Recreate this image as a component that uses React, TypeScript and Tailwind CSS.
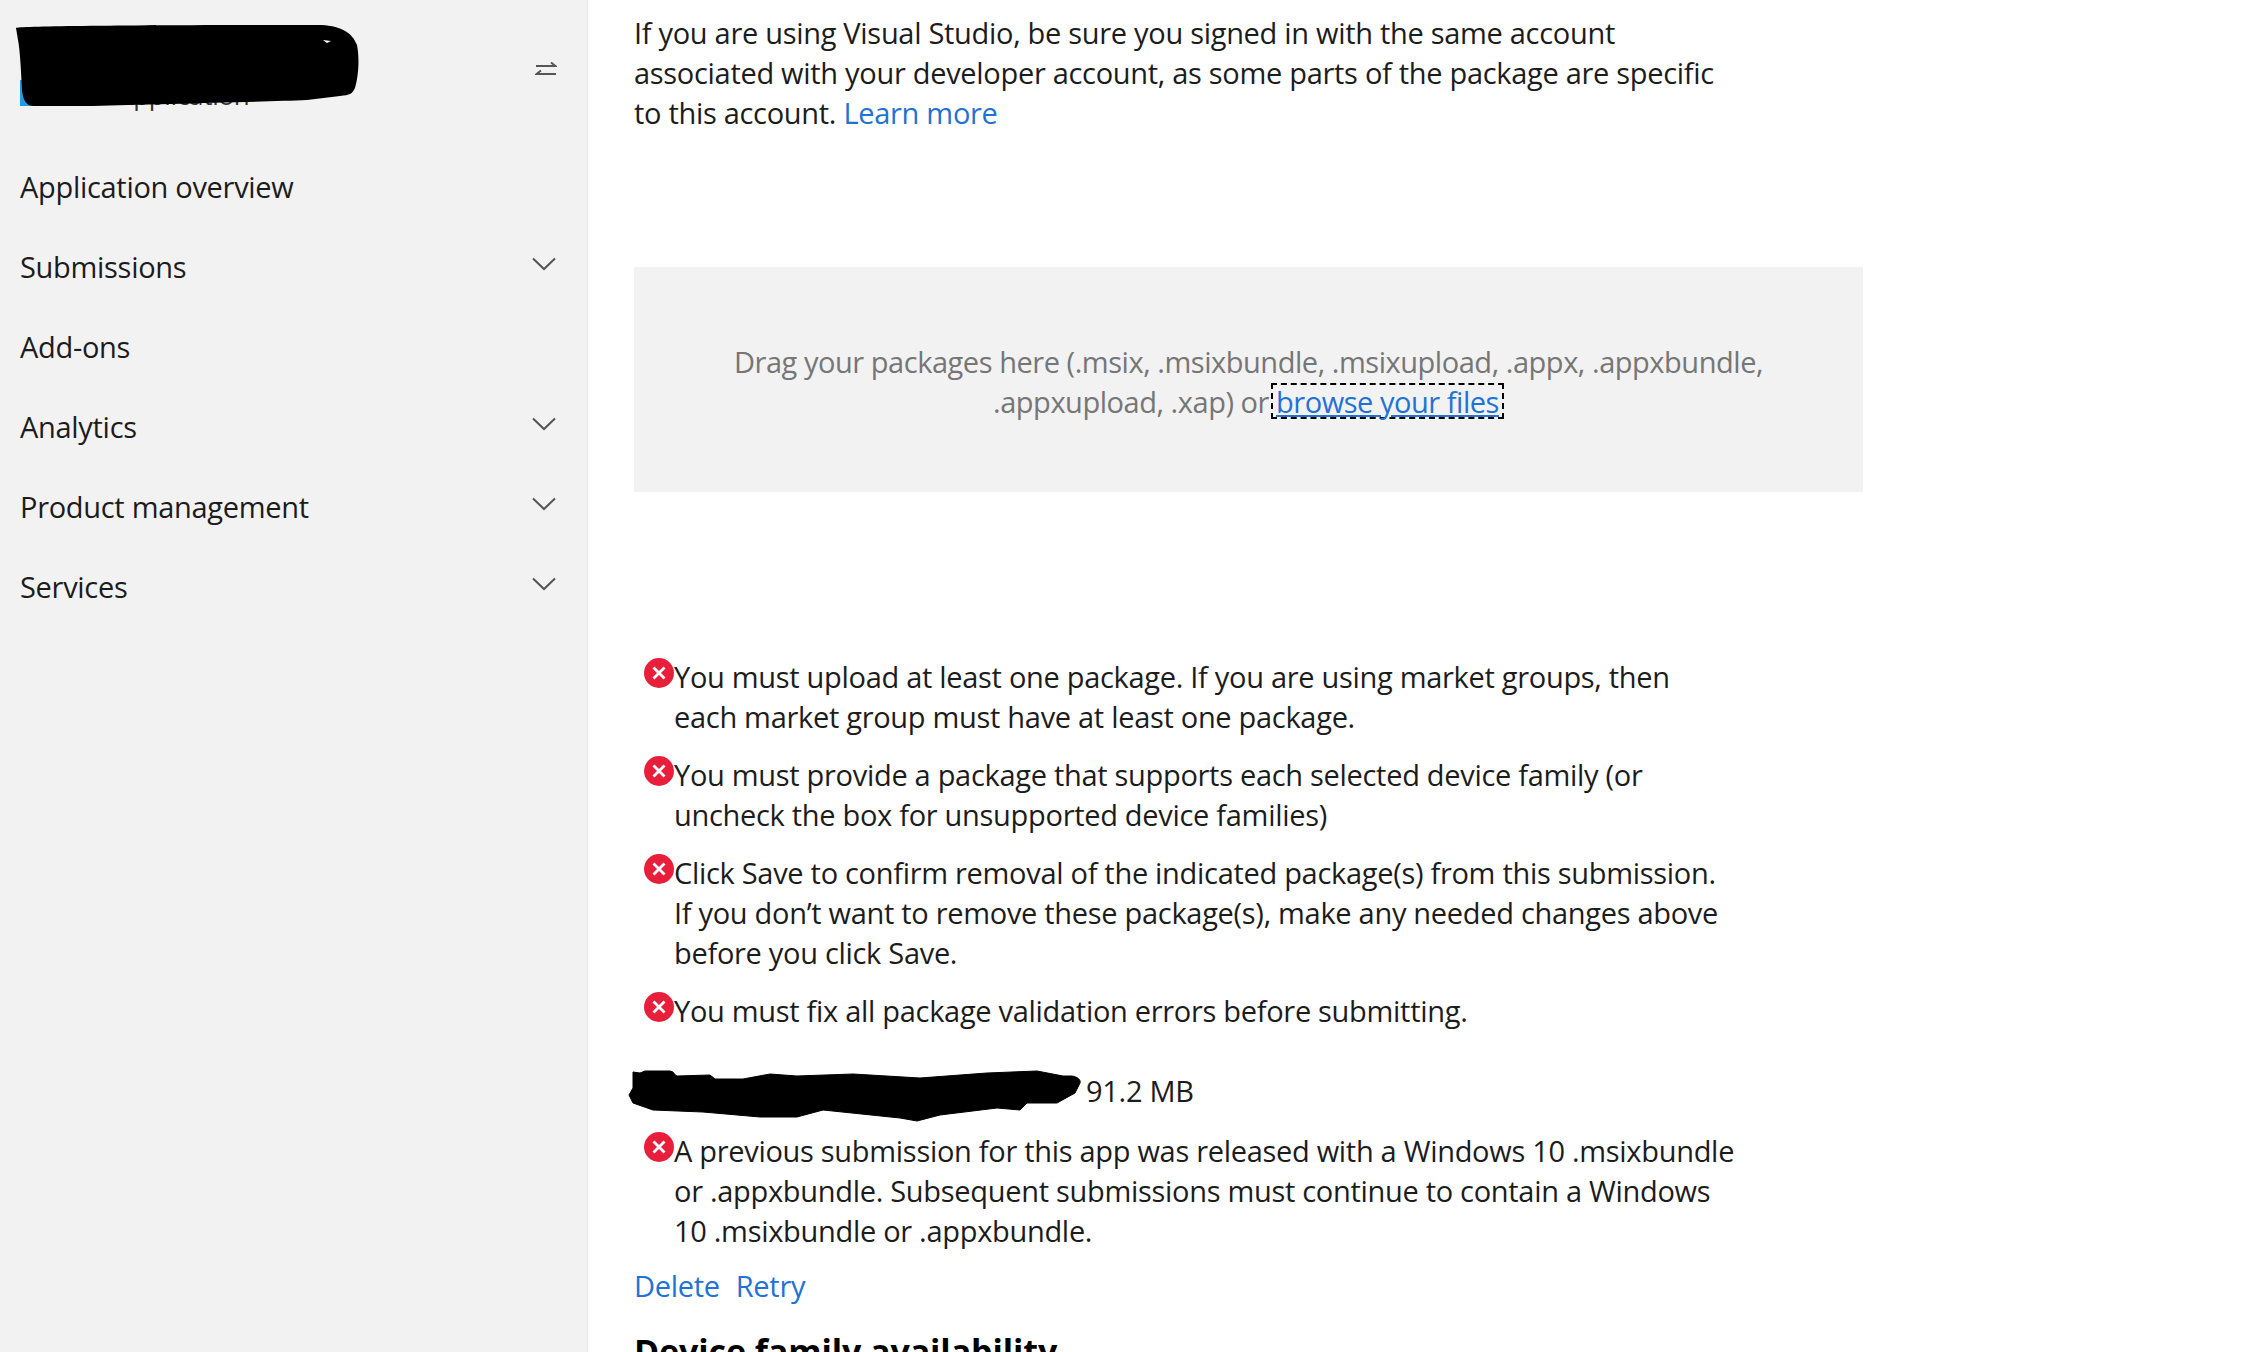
import React from 'react';

const navItems = [
  { label: 'Application overview', expandable: false },
  { label: 'Submissions', expandable: true },
  { label: 'Add-ons', expandable: false },
  { label: 'Analytics', expandable: true },
  { label: 'Product management', expandable: true },
  { label: 'Services', expandable: true },
];

function Chevron() {
  return (
    <svg width="26" height="16" viewBox="0 0 26 16" fill="none" className="mb-[6px] mr-[3px]">
      <path d="M2 2.5 L13 13 L24 2.5" stroke="#555" strokeWidth="2" />
    </svg>
  );
}

function SwapIcon() {
  return (
    <svg width="22" height="18" viewBox="0 0 22 18" fill="none">
      <path d="M1 5 H20 M16 1.5 L20.5 5 L16 5" stroke="#555" strokeWidth="2" />
      <path d="M21 13 H2 M6 9.5 L1.5 13 L6 13" stroke="#555" strokeWidth="2" />
    </svg>
  );
}

function ErrorIcon() {
  return (
    <svg width="30" height="30" viewBox="0 0 30 30" className="shrink-0 ml-[10px] mt-[1px]">
      <circle cx="15" cy="15" r="15" fill="#e81f3a" />
      <path d="M9.5 9.5 L20.5 20.5 M20.5 9.5 L9.5 20.5" stroke="#fff" strokeWidth="2.8" />
    </svg>
  );
}

function ErrorMessage({ children }: { children: React.ReactNode }) {
  return (
    <div className="flex">
      <ErrorIcon />
      <p>{children}</p>
    </div>
  );
}

export default function App() {
  return (
    <div className="flex h-[1352px] w-full overflow-hidden bg-white text-[29px] leading-[40px] text-[#1c1c1c] font-['Open_Sans',sans-serif] tracking-[-0.3px]">
      <aside className="w-[588px] shrink-0 bg-[#f2f2f3] border-r border-[#e6e6e6]">
        <div className="relative flex h-[147px] items-start justify-end pr-[30px] pt-[61px]">
          <SwapIcon />
          <div className="absolute left-[20px] top-[80px] h-[26px] w-[30px] bg-[#1f9be8]" />
          <span className="absolute left-[117px] top-[75px] text-[26px] text-[#333]">Application</span>
          {/* redaction over the app name, path is in page coordinates */}
          <svg width="350" height="90" viewBox="14 22 350 90" className="absolute left-[14px] top-[22px]">
            <path d="M16 28 C18 26 140 25 317 25 C340 25 352 32 357 45 C360 60 358 78 355 88 C352 94 350 95 340 96 L307 100 C260 102 150 104 93 106 L34 106 C26 106 23 100 22 90 C21 70 20 50 18 40 Z" fill="#000" />
            <path d="M323 40 L331 41 L327 43 Z" fill="#fff" />
          </svg>
        </div>
        <nav className="flex flex-col">
          {navItems.map((item) => (
            <div key={item.label} className="flex h-[80px] items-center justify-between pl-[20px] pr-[27px]">
              <span>{item.label}</span>
              {item.expandable && <Chevron />}
            </div>
          ))}
        </nav>
      </aside>

      <main className="flex-1 pl-[46px] pt-[13px]">
        <p>
          If you are using Visual Studio, be sure you signed in with the same account
          <br />
          associated with your developer account, as some parts of the package are specific
          <br />
          to this account. <a className="text-[#2272d6]">Learn more</a>
        </p>

        <div className="mt-[134px] flex h-[225px] w-[1229px] flex-col items-center pt-[75px] text-center bg-[#f2f2f2] text-[#767676] tracking-[-0.46px]">
          <p>Drag your packages here (.msix, .msixbundle, .msixupload, .appx, .appxbundle,</p>
          <p>
            .appxupload, .xap) or
            <a className="ml-[2px] border-2 border-dashed border-black px-[3px] leading-[34px] inline-block h-[36px] text-[#2272d6] underline">browse your files</a>
          </p>
        </div>

        <div className="mt-[165px] flex flex-col gap-[18px]">
          <ErrorMessage>
            You must upload at least one package. If you are using market groups, then
            <br />
            each market group must have at least one package.
          </ErrorMessage>
          <ErrorMessage>
            You must provide a package that supports each selected device family (or
            <br />
            uncheck the box for unsupported device families)
          </ErrorMessage>
          <ErrorMessage>
            Click Save to confirm removal of the indicated package(s) from this submission.
            <br />
            If you don’t want to remove these package(s), make any needed changes above
            <br />
            before you click Save.
          </ErrorMessage>
          <ErrorMessage>You must fix all package validation errors before submitting.</ErrorMessage>
        </div>

        <div className="mt-[40px] flex h-[40px] items-center">
          {/* redaction over the file name, path is in page coordinates */}
          <svg width="454" height="56" viewBox="628 1068 454 56" className="-ml-[6px] mt-[10px] shrink-0">
            <path d="M633 1072 L640 1073 L645 1071 L670 1071 C674 1071 675 1076 677 1076 L710 1075 L715 1079 L743 1079 L770 1074 L797 1076 L853 1074 L920 1078 L987 1073 L1037 1071 L1063 1076 L1072 1076 C1078 1077 1081 1080 1080 1083 L1075 1093 L1057 1103 L1027 1103 L1020 1110 L997 1108 L940 1115 L917 1121 L900 1118 L823 1110 L797 1117 L760 1117 L703 1112 L653 1110 L633 1103 L629 1095 L633 1088 Z" fill="#000" stroke="#000" strokeWidth="1" strokeLinejoin="round" />
          </svg>
          <span className="ml-[4px]">91.2 MB</span>
        </div>

        <div className="mt-[20px]">
          <ErrorMessage>
            A previous submission for this app was released with a Windows 10 .msixbundle
            <br />
            or .appxbundle. Subsequent submissions must continue to contain a Windows
            <br />
            10 .msixbundle or .appxbundle.
          </ErrorMessage>
        </div>

        <div className="mt-[15px] flex gap-[16px] text-[#2272d6]">
          <a>Delete</a>
          <a>Retry</a>
        </div>

        <h2 className="mt-[25px] text-[34px] font-bold text-black tracking-[-0.1px]">Device family availability</h2>
      </main>
    </div>
  );
}
